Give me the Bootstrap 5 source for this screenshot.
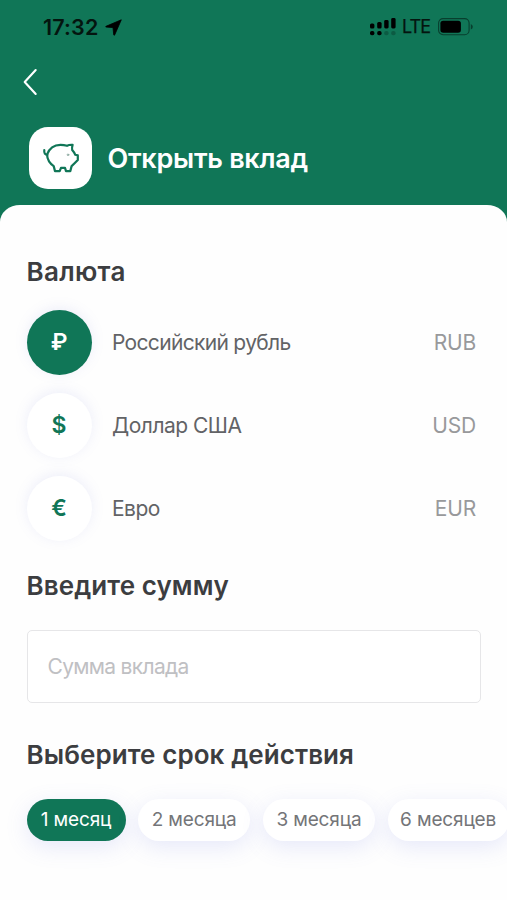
<!DOCTYPE html>
<html lang="ru">
<head>
<meta charset="utf-8">
<meta name="viewport" content="width=device-width, initial-scale=1">
<title>Открыть вклад</title>
<link href="https://cdn.jsdelivr.net/npm/bootstrap@5.3.0/dist/css/bootstrap.min.css" rel="stylesheet">
<style>
:root { --brand: #107657; --ink: #3c3d40; }
body { font-family: Inter, "Liberation Sans", sans-serif; background: var(--brand); height: 900px; overflow: hidden; }
.status-bar { height: 54px; padding: 0 34px 0 43px; color: #04150f; }
.clock { font-size: 21.5px; font-weight: 600; letter-spacing: .15px; line-height: 26px; }
.status-gap { gap: 7px; }
.signal { margin-right: 6px; }
.lte { font-size: 18px; line-height: 26px; letter-spacing: -1px; -webkit-text-stroke: .25px; }
.back-link { height: 56px; padding-left: 22px; }
.title-row { height: 94.5px; padding: 16.5px 0 0 29px; gap: 15.5px; }
.app-icon { width: 63px; height: 62.5px; border-radius: 19px; background: #fff; padding-top: 1px; }
.screen-title { font-size: 27px; font-weight: 600; line-height: 32px; letter-spacing: -.27px; }
.panel { height: 695.5px; border-radius: 20px 20px 0 0 / 17px 17px 0 0; padding: 51.5px 0 0 26.5px; background: #fefefe; }
.section-title { font-size: 26px; font-weight: 600; line-height: 32px; color: var(--ink); letter-spacing: .08px; }
.section-title.first { letter-spacing: .3px; }
.currency-list { margin-top: 21.5px; gap: 18px; padding-right: 31px; }
.coin { width: 65px; height: 65px; color: var(--brand); background: #fff; font-size: 23px; font-weight: 600; box-shadow: 0 -2px 13px rgba(120,130,220,.13); }
.coin.selected { background: var(--brand); color: #fff; }
.currency-name, .currency-code { padding-top: 1px; }
.currency-name { font-size: 21px; color: #626366; margin-left: 20.5px; letter-spacing: -.68px; }
.currency-name.loose { letter-spacing: -.5px; }
.currency-code { font-size: 21px; color: #98999b; letter-spacing: -.2px; }
.amount { width: 454px; height: 73px; margin-top: 28px; padding: 0 20px; border: 1.5px solid #e6e6e8; border-radius: 5px; font-size: 21px; background: #fff; letter-spacing: -.68px; }
.amount::placeholder { color: #bfc0c3; opacity: 1; }
.sum-title { margin-top: 29.5px; }
.term-title { margin-top: 36px; }
.terms { gap: 12.5px; margin-top: 27.5px; }
.term { height: 42px; padding: 0; border: 0; border-radius: 21px; font-size: 19px; line-height: 42px; color: #747578; background: #fff; box-shadow: 0 6px 22px rgba(110,125,225,.17); flex: none; width: 112.3px; letter-spacing: -.15px; }
.term.selected { color: #fff; background: var(--brand); width: 99px; }
.term.wide { width: 121px; }
</style>
</head>
<body>
<header>
  <div class="status-bar d-flex align-items-center justify-content-between">
    <div class="d-flex align-items-center status-gap">
      <span class="clock">17:32</span>
      <svg width="17" height="17" viewBox="0 0 17 17"><path d="M16.3.8 1 7.3Q.2 8 1.2 8.1L8 8.6l.7 7.2q.3 1 1 .1z" fill="#000" stroke="#000" stroke-width=".8" stroke-linejoin="round"/></svg>
    </div>
    <div class="d-flex align-items-center">
      <svg class="signal" width="26" height="18" viewBox="0 0 26 18" fill="#000"><rect y="5.5" width="4.4" height="5" rx="1.5"/><rect x="7.2" y="4" width="4.4" height="6.5" rx="1.5"/><rect x="14.2" y="2" width="4.4" height="8.5" rx="1.4"/><rect x="21.2" y="0" width="4.4" height="10.5" rx="1.4"/><rect y="13" width="4.4" height="4.2" rx="1.8"/><rect x="7.2" y="13" width="4.4" height="4.2" rx="1.8"/><g opacity=".22"><rect x="14.2" y="13" width="4.4" height="4.2" rx="1.8"/><rect x="21.2" y="13" width="4.4" height="4.2" rx="1.8"/></g></svg>
      <span class="lte">LTE</span>
      <svg class="ms-2" width="35" height="18" viewBox="0 0 35 18"><rect x=".6" y=".6" width="30.5" height="16.2" rx="4.5" fill="none" stroke="#083f2e" stroke-width="1.1"/><rect x="2.4" y="2.8" width="20.5" height="12" rx="2.8"/><path d="M32.8 6v5.5q2-.8 2-2.7T32.8 6" fill="#083f2e"/></svg>
    </div>
  </div>
  <div class="back-link d-flex align-items-center">
    <svg width="16" height="28" viewBox="0 0 16 28"><path d="M13.7 2 2.7 14l11 12" fill="none" stroke="#fff" stroke-width="2.1" stroke-linecap="round" stroke-linejoin="round"/></svg>
  </div>
  <div class="title-row d-flex align-items-start">
    <div class="app-icon d-flex align-items-center justify-content-center">
      <svg width="38" height="32" viewBox="0 0 38 32" fill="none" stroke="#107657" stroke-width="2.2" stroke-linecap="round" stroke-linejoin="round"><path d="M2.3 8q-.6 4.800 3.300 4.900M5 12.700Q8.500 2.800 18.500 2.800q3.500 0 6.500 1 2.500-1.300 5.600-1-.9 2.700-.4 5.200 2.200 2.500 3.100 4.800l2.500.6v4.700q-3 3.200-6.200 6l-1.300 5H24l-1-3.200h-4l-1.300 3.200H13l-1.300-5Q5.500 20 5 12.700"/><circle cx="26" cy="12.800" r=".8" stroke-width="1" stroke="#8ba99f"/></svg>
    </div>
    <h1 class="screen-title text-white mb-0 mt-3">Открыть вклад</h1>
  </div>
</header>
<main class="panel">
  <h2 class="section-title first mb-0">Валюта</h2>
  <div class="currency-list d-flex flex-column">
    <div class="d-flex align-items-center">
      <span class="coin selected rounded-circle d-flex align-items-center justify-content-center">₽</span>
      <span class="currency-name">Российский рубль</span><span class="currency-code ms-auto">RUB</span>
    </div>
    <div class="d-flex align-items-center">
      <span class="coin rounded-circle d-flex align-items-center justify-content-center">$</span>
      <span class="currency-name loose">Доллар США</span><span class="currency-code ms-auto">USD</span>
    </div>
    <div class="d-flex align-items-center">
      <span class="coin rounded-circle d-flex align-items-center justify-content-center">€</span>
      <span class="currency-name loose">Евро</span><span class="currency-code ms-auto">EUR</span>
    </div>
  </div>
  <h2 class="section-title sum-title mb-0">Введите сумму</h2>
  <input class="amount form-control" type="text" placeholder="Сумма вклада" aria-label="Сумма вклада">
  <h2 class="section-title term-title mb-0">Выберите срок действия</h2>
  <div class="terms d-flex">
    <button class="term selected" type="button">1 месяц</button>
    <button class="term" type="button">2 месяца</button>
    <button class="term" type="button">3 месяца</button>
    <button class="term wide" type="button">6 месяцев</button>
  </div>
</main>
<script src="https://cdn.jsdelivr.net/npm/bootstrap@5.3.0/dist/js/bootstrap.bundle.min.js"></script>
</body>
</html>
